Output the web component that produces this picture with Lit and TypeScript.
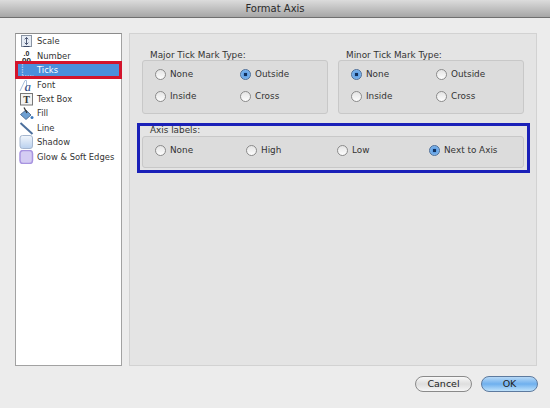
import { LitElement, html, css, svg } from "lit";
import { customElement } from "lit/decorators.js";

const icons: Record<string, unknown> = {
  Scale: svg`<rect x="2.5" y="1.5" width="10" height="11" fill="#e6ecf5" stroke="#8a94a3"/><path d="M7.5 3.5v7M5.7 5.3l1.8-1.8 1.8 1.8M5.7 8.7l1.8 1.8 1.8-1.8" fill="none" stroke="#3d4a68" stroke-width="0.9"/><path d="M4.5 12.5h6" stroke="#3d4a68"/>`,
  Number: svg`<text x="7.5" y="7" font-size="7" font-weight="700" text-anchor="middle" font-family="Liberation Sans" fill="#222">.0</text><text x="7.5" y="13.5" font-size="8" font-weight="700" text-anchor="middle" font-family="Liberation Sans" fill="#222">00</text>`,
  Ticks: svg`<path d="M3.5 1v12M3.5 13h11" stroke="#a9c4ea" stroke-width="1.4" fill="none" stroke-dasharray="1.5 1"/>`,
  Font: svg`<path d="M1 13L6 2.5h1.5V13" stroke="#a9c0dc" stroke-width="1" fill="none"/><text x="5.5" y="12.5" font-size="13" font-style="italic" font-family="Liberation Serif" fill="#2b4a86">a</text>`,
  "Text Box": svg`<rect x="1.5" y="1.5" width="12" height="11.5" fill="#f2f2f2" stroke="#777"/><text x="7.5" y="11" font-size="10" font-weight="700" text-anchor="middle" font-family="Liberation Serif" fill="#333">T</text>`,
  Fill: svg`<path d="M1.5 8.5L7 4l5 5-5 4.5z" fill="#6fa0d2" stroke="#3f5f88" stroke-width="0.8"/><path d="M5 1.5l3 5.5" stroke="#333" stroke-width="1.3"/><circle cx="13" cy="11.5" r="1.5" fill="#3a78bd"/>`,
  Line: svg`<path d="M1.5 2l12 11" stroke="#4c6f9c" stroke-width="2"/>`,
  Shadow: svg`<defs><linearGradient id="sh" x1="0" y1="0" x2="0" y2="1"><stop offset="0" stop-color="#f2f6fb"/><stop offset="1" stop-color="#b9d0ee"/></linearGradient></defs><rect x="1" y="0.5" width="12.5" height="13" rx="2.5" fill="url(#sh)" stroke="#a5b6cf"/>`,
  "Glow & Soft Edges": svg`<rect x="1" y="0.5" width="12.5" height="13" rx="3" fill="#d4ccf3" stroke="#a894e0" stroke-width="1.5"/>`,
};
const items = Object.keys(icons);

@customElement("app-root")
export class AppRoot extends LitElement {
  static styles = css`
    :host { display: block; width: 550px; height: 408px; position: relative; background: #ececec; overflow: hidden;
      font-family: "DejaVu Sans", sans-serif; font-size: 8.85px; color: #333; }
    .title { height: 17px; background: linear-gradient(#dcdcdc, #a6a6a6); border-bottom: 1px solid #6f6f6f;
      display: flex; align-items: center; justify-content: center; font-size: 10px; color: #2a2a2a; }
    .body { display: flex; gap: 7px; padding: 15px 13px 0 15px; }
    .list { width: 107px; height: 333px; box-sizing: border-box; background: #fff; border: 1px solid #a2a2a2; border-top-color: #8c8c8c; }
    .row { height: 14.45px; display: flex; align-items: center; gap: 3px; padding-left: 3px; white-space: nowrap; font-size: 8.4px; }
    .row svg { width: 15px; height: 14px; flex: none; }
    .row.sel { background: #4a8fdc; color: #fff; }
    .panel { width: 408px; height: 333px; box-sizing: border-box; background: #e4e4e4; border: 1px solid #d2d2d2; padding: 15px 12px 0 12px; }
    .groups { display: grid; grid-template-columns: 186px 186px; gap: 10px; margin-bottom: 10px; }
    .legend { padding-left: 8px; height: 11px; line-height: 13px; }
    .legend.tall { height: 12px; }
    .box { background: #dcdcdc; border: 1px solid #c8c8c8; border-radius: 3px; box-sizing: border-box; }
    .grid { height: 54px; display: grid; grid-template-columns: 85px 1fr; grid-auto-rows: 22px; padding: 2px 0 0 12px; align-items: center; }
    .axis { height: 32px; display: grid; grid-template-columns: 91px 91px 92px 1fr; align-items: center; padding: 0 0 4px 12px; }
    .r { display: flex; align-items: center; gap: 4px; }
    .c { width: 11px; height: 11px; border-radius: 50%; border: 1px solid #8b8b8b; background: linear-gradient(#e4e4e4, #fdfdfd); box-sizing: border-box; flex: none; }
    .c.on { background: radial-gradient(circle, #12305c 0 1.5px, #5f9fe4 2px, #9cc8f2 100%); border-color: #4a6d99; }
    .footer { display: flex; justify-content: flex-end; gap: 9px; padding: 10px 12px 0 0; }
    .btn { width: 55px; height: 13.5px; border-radius: 8px; border: 1.5px solid #8a8a8a; display: flex; align-items: center; justify-content: center;
      background: linear-gradient(#f8f8f8, #dedede 50%, #f6f6f6); font-size: 9.5px; color: #222; }
    .btn.ok { border-color: #5d7a9e; background: linear-gradient(#b6d8f6, #6fb0ee 50%, #bfe2fb); }
    .mark { position: absolute; box-sizing: border-box; pointer-events: none; }
    .red { left: 15px; top: 61px; width: 107px; height: 18px; border: 3px solid #d3142c; }
    .blue { left: 137px; top: 123px; width: 393px; height: 50px; border: 3px solid #1a20b8; }
  `;

  private radio(label: string, on = false) {
    return html`<div class="r"><span class="c ${on ? "on" : ""}"></span>${label}</div>`;
  }

  render() {
    return html`
      <div class="title">Format Axis</div>
      <div class="body">
        <div class="list">
          ${items.map(
            (n) => html`<div class="row ${n === "Ticks" ? "sel" : ""}"><svg viewBox="0 0 15 14">${icons[n]}</svg>${n}</div>`
          )}
        </div>
        <div class="panel">
          <div class="groups">
            <div>
              <div class="legend">Major Tick Mark Type:</div>
              <div class="box grid">${this.radio("None")}${this.radio("Outside", true)}${this.radio("Inside")}${this.radio("Cross")}</div>
            </div>
            <div>
              <div class="legend">Minor Tick Mark Type:</div>
              <div class="box grid">${this.radio("None", true)}${this.radio("Outside")}${this.radio("Inside")}${this.radio("Cross")}</div>
            </div>
          </div>
          <div class="legend tall">Axis labels:</div>
          <div class="box axis">${this.radio("None")}${this.radio("High")}${this.radio("Low")}${this.radio("Next to Axis", true)}</div>
        </div>
      </div>
      <div class="footer"><div class="btn">Cancel</div><div class="btn ok">OK</div></div>
      <div class="mark red"></div>
      <div class="mark blue"></div>
    `;
  }
}
